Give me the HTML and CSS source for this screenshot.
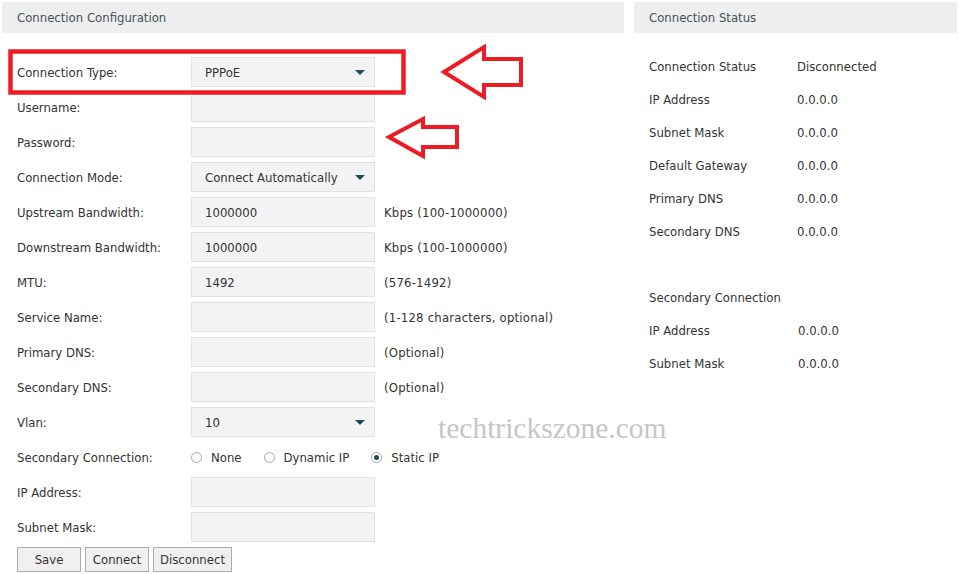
FILE: index.html
```html
<!DOCTYPE html>
<html lang="en">
<head>
    <meta charset="UTF-8">
    <title>Internet - PPPoE</title>
    <link rel="stylesheet" href="styles.css">
</head>
<body>
    <div class="page">
        <div class="panel config">
            <div class="panel-title">Connection Configuration</div>

            <div class="form">
                <div class="row">
                    <label>Connection Type:</label>
                    <div class="field select">PPPoE<span class="caret"></span></div>
                </div>
                <div class="row">
                    <label>Username:</label>
                    <input class="field" type="text">
                </div>
                <div class="row">
                    <label>Password:</label>
                    <input class="field" type="password">
                </div>
                <div class="row">
                    <label>Connection Mode:</label>
                    <div class="field select">Connect Automatically<span class="caret"></span></div>
                </div>
                <div class="row">
                    <label>Upstream Bandwidth:</label>
                    <input class="field" type="text" value="1000000">
                    <span class="hint">Kbps (100-1000000)</span>
                </div>
                <div class="row">
                    <label>Downstream Bandwidth:</label>
                    <input class="field" type="text" value="1000000">
                    <span class="hint">Kbps (100-1000000)</span>
                </div>
                <div class="row">
                    <label>MTU:</label>
                    <input class="field" type="text" value="1492">
                    <span class="hint">(576-1492)</span>
                </div>
                <div class="row">
                    <label>Service Name:</label>
                    <input class="field" type="text">
                    <span class="hint">(1-128 characters, optional)</span>
                </div>
                <div class="row">
                    <label>Primary DNS:</label>
                    <input class="field" type="text">
                    <span class="hint">(Optional)</span>
                </div>
                <div class="row">
                    <label>Secondary DNS:</label>
                    <input class="field" type="text">
                    <span class="hint">(Optional)</span>
                </div>
                <div class="row">
                    <label>Vlan:</label>
                    <div class="field select">10<span class="caret"></span></div>
                </div>
                <div class="row">
                    <label>Secondary Connection:</label>
                    <div class="radios">
                        <span class="radio"><i></i>None</span>
                        <span class="radio"><i></i>Dynamic IP</span>
                        <span class="radio checked"><i></i>Static IP</span>
                    </div>
                </div>
                <div class="row">
                    <label>IP Address:</label>
                    <input class="field" type="text">
                </div>
                <div class="row">
                    <label>Subnet Mask:</label>
                    <input class="field" type="text">
                </div>

                <div class="buttons">
                    <button class="btn save">Save</button>
                    <button class="btn">Connect</button>
                    <button class="btn">Disconnect</button>
                </div>
            </div>
        </div>

        <div class="panel status">
            <div class="panel-title">Connection Status</div>

            <div class="status-list">
                <div class="status-row"><span>Connection Status</span><span>Disconnected</span></div>
                <div class="status-row"><span>IP Address</span><span>0.0.0.0</span></div>
                <div class="status-row"><span>Subnet Mask</span><span>0.0.0.0</span></div>
                <div class="status-row"><span>Default Gateway</span><span>0.0.0.0</span></div>
                <div class="status-row"><span>Primary DNS</span><span>0.0.0.0</span></div>
                <div class="status-row"><span>Secondary DNS</span><span>0.0.0.0</span></div>
                <div class="status-row empty"></div>
                <div class="status-row"><span>Secondary Connection</span></div>
                <div class="status-row second"><span>IP Address</span><span>0.0.0.0</span></div>
                <div class="status-row second"><span>Subnet Mask</span><span>0.0.0.0</span></div>
            </div>
        </div>
    </div>

    <!-- watermark + red annotations drawn over the screenshot -->
    <div class="watermark">techtrickszone.com</div>
    <svg class="marks" width="959" height="574" viewBox="0 0 959 574">
        <rect x="10.5" y="51.5" width="393" height="41" fill="none" stroke="#ed1c24" stroke-width="4.5"/>
        <path d="M444 72 L484 47 L484 59 L521 59 L521 85 L484 85 L484 97 Z" fill="none" stroke="#ed1c24" stroke-width="4" stroke-linejoin="miter"/>
        <path d="M389 137 L423 119 L423 127 L457 127 L457 147 L423 147 L423 156 Z" fill="none" stroke="#ed1c24" stroke-width="4" stroke-linejoin="miter"/>
    </svg>
</body>
</html>
```

FILE: styles.css
```css
* {
    margin: 0;
    padding: 0;
    box-sizing: border-box;
}

body {
    font-family: "DejaVu Sans Condensed", "DejaVu Sans", sans-serif;
    font-size: 13px;
    color: #333;
    background: #fff;
    width: 959px;
    height: 574px;
    overflow: hidden;
    position: relative;
}

.page {
    display: flex;
    gap: 10px;
    padding: 2px 0 0 2px;
}

.config {
    width: 622px;
}

.status {
    width: 323px;
}

.panel-title {
    height: 31px;
    line-height: 31px;
    background: #eeeeee;
    padding-left: 15px;
    color: #44525a;
}

.form {
    padding: 24px 0 0 15px;
}

.row {
    display: flex;
    align-items: center;
    height: 30px;
    margin-bottom: 5px;
}

.row label {
    width: 174px;
    flex: none;
}

.field {
    width: 184px;
    height: 30px;
    flex: none;
    background: #f3f3f3;
    border: 1px solid #e2e2e2;
    padding: 0 13px;
    font-family: inherit;
    font-size: 13px;
    color: #333;
    outline: none;
}

.select {
    display: flex;
    align-items: center;
    justify-content: space-between;
    padding-right: 9px;
}

.caret {
    width: 0;
    height: 0;
    border-left: 5.5px solid transparent;
    border-right: 5.5px solid transparent;
    border-top: 5px solid #1d4c58;
}

.hint {
    margin-left: 9px;
    letter-spacing: 0.2px;
}

.radios {
    display: flex;
    gap: 22px;
}

.radio {
    display: flex;
    align-items: center;
}

.radio i {
    width: 11px;
    height: 11px;
    border: 1px solid #a8a8a8;
    border-radius: 50%;
    background: #fff;
    margin-right: 9px;
    position: relative;
}

.radio.checked i::after {
    content: "";
    position: absolute;
    left: 2px;
    top: 2px;
    width: 5px;
    height: 5px;
    border-radius: 50%;
    background: #1d4c58;
}

.buttons {
    display: flex;
    gap: 4px;
    margin-top: 1px;
}

.btn {
    height: 25px;
    width: 64px;
    background: #f0f0f0;
    border: 1px solid #adadad;
    font-family: inherit;
    font-size: 13px;
    color: #333;
}

.btn:last-child {
    width: 79px;
}

.status-list {
    padding: 17px 0 0 15px;
}

.status-row {
    display: flex;
    height: 33px;
    line-height: 33px;
}

.status-row span:first-child {
    width: 148px;
}

.status-row.second span:first-child {
    width: 149px;
}

.watermark {
    position: absolute;
    left: 438px;
    top: 412px;
    font-family: "Liberation Serif", serif;
    font-size: 29.5px;
    color: #c6c6c6;
}

.marks {
    position: absolute;
    left: 0;
    top: 0;
    pointer-events: none;
}
```
